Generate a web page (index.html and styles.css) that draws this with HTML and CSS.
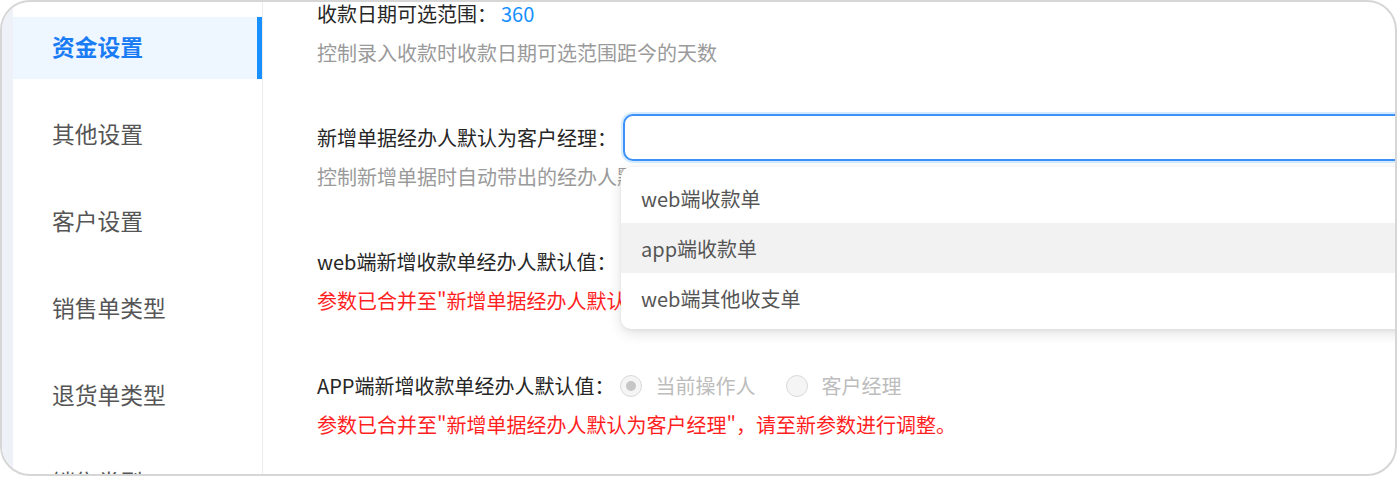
FILE: index.html
```html
<!DOCTYPE html>
<html lang="zh-CN">
<head>
<meta charset="utf-8">
<link rel="stylesheet" href="styles.css">
</head>
<body>
<div class="frame">
  <div class="strip"></div>
  <nav class="sidebar">
    <div class="nav-item active">资金设置</div>
    <div class="nav-item">其他设置</div>
    <div class="nav-item">客户设置</div>
    <div class="nav-item">销售单类型</div>
    <div class="nav-item">退货单类型</div>
    <div class="nav-item">销售类型</div>
  </nav>
  <main class="main">
    <div class="scroll">
      <section class="group">
        <div class="row"><span class="label">收款日期可选范围：</span><span class="value">360</span></div>
        <div class="desc">控制录入收款时收款日期可选范围距今的天数</div>
      </section>
      <section class="group">
        <div class="row">
          <span class="label">新增单据经办人默认为客户经理：</span>
          <div class="select-wrap">
            <div class="input"></div>
            <ul class="dropdown">
              <li class="option">web端收款单</li>
              <li class="option hover">app端收款单</li>
              <li class="option">web端其他收支单</li>
            </ul>
          </div>
        </div>
        <div class="desc">控制新增单据时自动带出的经办人默认为客户经理</div>
      </section>
      <section class="group">
        <div class="row"><span class="label">web端新增收款单经办人默认值：</span></div>
        <div class="warn">参数已合并至"新增单据经办人默认为客户经理"，请至新参数进行调整。</div>
      </section>
      <section class="group">
        <div class="row">
          <span class="label">APP端新增收款单经办人默认值：</span>
          <label class="radio"><span class="circle checked"></span><span class="radio-text">当前操作人</span></label>
          <label class="radio"><span class="circle"></span><span class="radio-text">客户经理</span></label>
        </div>
        <div class="warn">参数已合并至"新增单据经办人默认为客户经理"，请至新参数进行调整。</div>
      </section>
    </div>
  </main>
</div>
</body>
</html>
```

FILE: styles.css
```css
* { box-sizing: border-box; }
html, body { margin: 0; padding: 0; background: #ffffff; }
body {
  font-family: "Noto Sans CJK SC", "Noto Sans", sans-serif;
  width: 1399px;
  height: 478px;
  overflow: hidden;
}
.frame {
  width: 1397px;
  height: 476px;
  border: 2px solid #d6d6d6;
  border-radius: 30px;
  overflow: hidden;
  display: flex;
  background: #ffffff;
}
.strip {
  width: 11px;
  flex: none;
  background: #eef1f7;
}
.sidebar {
  width: 250px;
  flex: none;
  border-right: 1px solid #ececec;
  padding-top: 15px;
  display: flex;
  flex-direction: column;
  gap: 25px;
}
.nav-item {
  height: 62px;
  flex: none;
  display: flex;
  align-items: center;
  padding-left: 39px;
  padding-bottom: 3px;
  font-size: 22.75px;
  color: #555555;
}
.nav-item.active {
  background: #eef6ff;
  color: #1a7cf5;
  font-weight: 600;
  box-shadow: inset -5px 0 0 #1890ff;
}
.main {
  flex: 1;
  min-width: 0;
  overflow: hidden;
  padding-left: 54px;
}
.scroll {
  margin-top: -12px;
  display: flex;
  flex-direction: column;
  gap: 48px;
}
.group {
  display: flex;
  flex-direction: column;
  gap: 3px;
}
.row {
  height: 47px;
  display: flex;
  align-items: center;
  font-size: 20px;
  color: #262626;
  white-space: nowrap;
}
.label { flex: none; }
.value { color: #1890ff; margin-left: 4px; }
.desc, .warn {
  font-size: 20px;
  line-height: 26px;
  height: 26px;
  white-space: nowrap;
}
.desc { color: #9a9a9a; }
.warn { color: #ff1f1f; }
.select-wrap {
  position: relative;
  margin-left: 6px;
  flex: none;
}
.input {
  width: 900px;
  height: 47px;
  border: 2px solid #3d91f7;
  border-radius: 10px;
  box-shadow: 0 0 0 2px rgba(24, 144, 255, 0.18);
  background: #ffffff;
}
.dropdown {
  position: absolute;
  left: -2px;
  top: 53px;
  width: 900px;
  margin: 0;
  padding: 6px 0;
  list-style: none;
  background: #ffffff;
  border-radius: 10px;
  box-shadow: 0 4px 14px rgba(0, 0, 0, 0.12), 0 1px 4px rgba(0, 0, 0, 0.06);
  z-index: 2;
}
.option {
  height: 50px;
  display: flex;
  align-items: center;
  padding-left: 20px;
  font-size: 20px;
  color: #555555;
}
.option.hover { background: #f2f2f2; }
.radio {
  display: flex;
  align-items: center;
  margin-left: 6px;
  margin-right: 25px;
}
.circle {
  width: 22px;
  height: 22px;
  border-radius: 50%;
  border: 1px solid #d9d9d9;
  background: #f5f5f5;
  display: flex;
  align-items: center;
  justify-content: center;
}
.circle.checked::after {
  content: "";
  width: 10px;
  height: 10px;
  border-radius: 50%;
  background: #c6c6c6;
}
.radio-text {
  margin-left: 13px;
  color: #bdbdbd;
}
```
